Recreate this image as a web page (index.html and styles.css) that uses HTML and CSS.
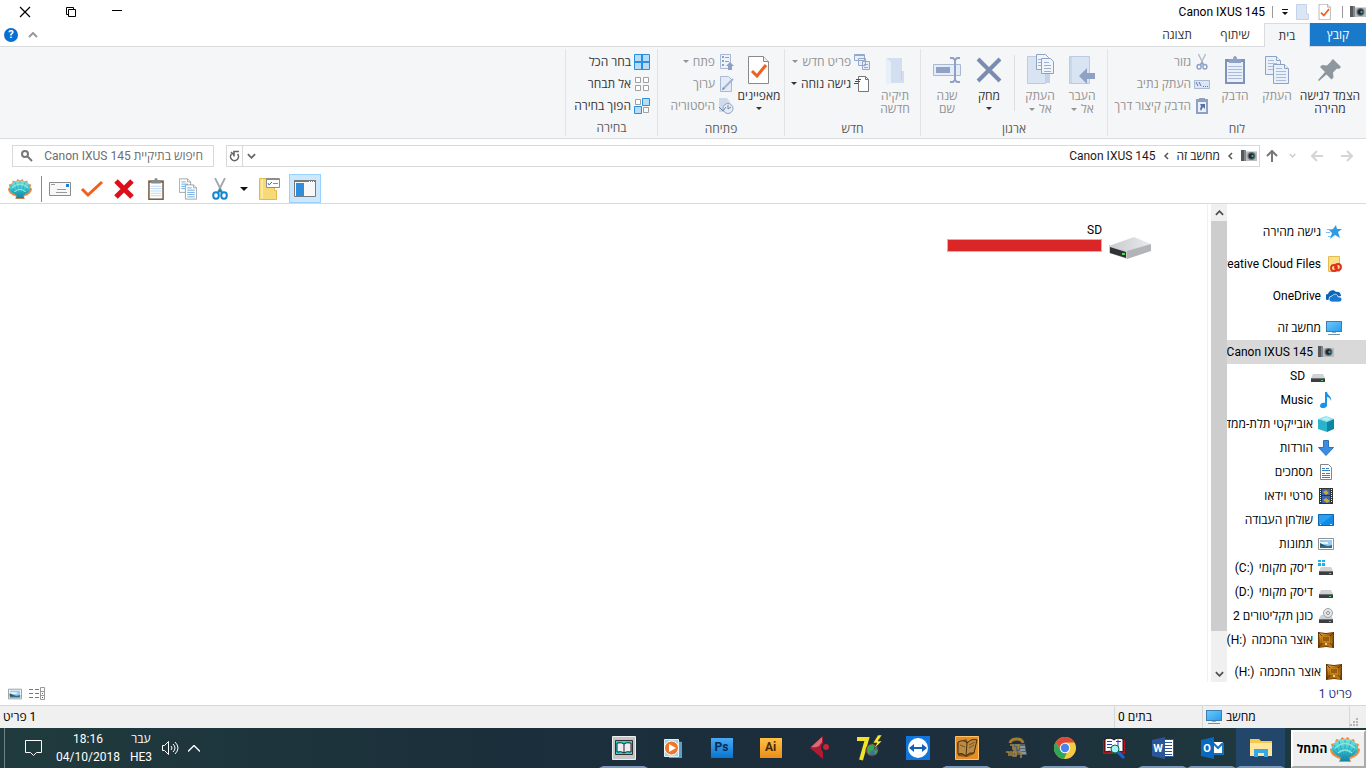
FILE: index.html
```html
<!DOCTYPE html>
<html lang="he" dir="rtl">
<head>
<meta charset="UTF-8">
<meta name="viewport" content="width=device-width, initial-scale=1.0">
<title>Canon IXUS 145</title>
<link rel="stylesheet" href="styles.css">
</head>
<body>
  <!-- shared icons -->
  <svg class="sprite" aria-hidden="true">
    <defs>
      <linearGradient id="shellFill" x1="0" y1="0" x2="0" y2="1"><stop offset="0" stop-color="#7fe3dc"/><stop offset=".5" stop-color="#35c3d0"/><stop offset="1" stop-color="#1583a8"/></linearGradient>
      <linearGradient id="screenFill" x1="0" y1="0" x2="1" y2="1"><stop offset="0" stop-color="#6cc8f8"/><stop offset="1" stop-color="#2a9df0"/></linearGradient>
      <linearGradient id="goldFill" x1="0" y1="0" x2="1" y2="1"><stop offset="0" stop-color="#e8a82c"/><stop offset=".5" stop-color="#9a5a0c"/><stop offset="1" stop-color="#d08a1c"/></linearGradient>
      <linearGradient id="metalFill" x1="0" y1="0" x2="1" y2="0"><stop offset="0" stop-color="#c9cacc"/><stop offset="1" stop-color="#e9eaec"/></linearGradient>
    </defs>
    <symbol id="camera" viewBox="0 0 16 16">
      <path fill="#55595c" d="M0 2h4v11H0z"/><path fill="#83878a" d="M3 2h2v11H3z"/><path fill="#b9bcbf" d="M5 3h11v10H5z"/><path fill="#d5d7d9" d="M5 3h11v1H5z"/>
      <circle cx="10.500" cy="8" r="4" fill="#6c7073"/><circle cx="10.500" cy="8" r="2.800" fill="#1d2930"/><circle cx="11.500" cy="8" r="1.200" fill="#2fa3a5"/>
    </symbol>
    <symbol id="caret" viewBox="0 0 8 4"><path fill="currentColor" d="M1 0h6L4 3z"/></symbol>
    <symbol id="copy" viewBox="0 0 24 28">
      <g fill="var(--paper)" stroke="var(--line)"><path d="M.5.5h11l4 4v14H.5z"/><path d="M11.500.5v4h4"/><path d="M8.500 8.500h11l4 4v15h-15z"/><path d="M19.500 8.500v4h4"/></g>
      <path stroke="var(--rule)" fill="none" d="M3 4.500h6M3 7.500h9M3 10.500h5M3 13.500h5M11 12.500h6M11 15.500h10M11 18.500h10M11 21.500h10M11 24.500h10"/>
    </symbol>
    <symbol id="clipboard" viewBox="0 0 20 28">
      <path fill="var(--board)" d="M0 3h20v25H0z"/><path fill="var(--paper)" d="M2 6h16v20H2z"/>
      <path fill="var(--line)" d="M4 3h4c0-4 4-4 4 0h4v4H4z"/><path stroke="var(--rule)" d="M3 10.500h14M3 13.500h14M3 16.500h14M3 19.500h14M3 22.500h14"/>
    </symbol>
    <symbol id="scissors" viewBox="0 0 16 22">
      <path fill="none" stroke="var(--blade)" stroke-width="1.800" d="M3 0l7 14M13 0L6 14"/>
      <g fill="none" stroke="var(--handle)" stroke-width="2"><ellipse cx="4" cy="17.500" rx="2.800" ry="3.200"/><ellipse cx="12" cy="17.500" rx="2.800" ry="3.200"/><path d="M6 15l2-3 2 3"/></g>
    </symbol>
    <symbol id="shell" viewBox="0 0 30 27">
      <path fill="#f08a3c" d="M9 26l1-3C4 21 0 18 0 13l2-1-1-4 4-1 1-4 4 1 2-3 3 2 3-2 2 3 4-1 1 4 4 1-1 4 2 1c0 5-4 8-10 10l1 3z"/>
      <path fill="url(#shellFill)" d="M10 25l1-4C6 20 2 17 2 13c0-6 6-10 13-10s13 4 13 10c0 4-4 7-9 8l1 4z"/>
      <path fill="none" stroke="#178dac" stroke-width=".6" d="M15 24V4M14 23L9 5M16 23l5-18M13 23L4 9M17 23l9-14M12 22L3 14M18 22l9-8"/>
      <path fill="none" stroke="#8be6dd" stroke-width="1.500" d="M5 12q10-9 20 0M8 17q7-6 14 0"/>
    </symbol>
    <symbol id="drive" viewBox="0 0 16 16">
      <path fill="#d0d1d3" d="M3 6h10l2 4H1z"/><path fill="#3c3f42" d="M1 10h14v4H1z"/><path fill="#707376" d="M1 10h14v1H1z"/><path fill="#45e052" d="M11 12h2v1h-2z"/>
    </symbol>
    <symbol id="gold" viewBox="0 0 16 16">
      <path fill="#6d3c05" d="M0 0l8 1 8-1v16l-8-1-8 1z"/><path fill="url(#goldFill)" d="M1 1l7 1 7-1-1 14-6-1-6 1z"/><path fill="#c07f1a" d="M4 4h8v7H4z"/><path fill="#9a5c0d" d="M5 5h6v4H5z"/><path fill="#f5cf63" d="M7 11h2v2H7z"/><path stroke="#4e2a02" stroke-width=".8" d="M0 0l4 4m12-4l-4 4M0 16l4-5m12 5l-4-5"/>
    </symbol>
    <symbol id="monitor" viewBox="0 0 16 16">
      <path fill="#3b7fb1" d="M0 1h16v11H0z"/><path fill="url(#screenFill)" d="M1 2h14v9H1z"/><path fill="#9db3c1" d="M6 12h4v1H6z"/><path fill="#6f93ab" d="M2 14h12v1H2z"/>
    </symbol>
    <symbol id="picture" viewBox="0 0 16 16">
      <path fill="#fff" stroke="#8f9396" d="M.5 2.500h15v11H.5z"/><path fill="#9bcbf1" d="M2 4h12v8H2z"/><path fill="#e8f3fa" d="M2 6h8v2H2z"/><path fill="#356b86" d="M2 8l3 1 5 1 4-1v3H2z"/><path fill="#2f5b54" d="M2 7l6 3H2z"/>
    </symbol>
    <symbol id="props" viewBox="0 0 22 28">
      <path fill="#fff" stroke="#8a8a8a" d="M.5.5h15l5 5v22H.5z"/><path fill="#eee" stroke="#8a8a8a" d="M15.500.5v5h5"/><path fill="none" stroke="#f0601c" stroke-width="3" d="M4 15l5 5 9-11"/>
    </symbol>
    <symbol id="chev" viewBox="0 0 10 6"><path fill="none" stroke="currentColor" stroke-width="2" d="M1 1l4 4 4-4"/></symbol>
  </svg>

  <header class="titlebar">
    <svg class="i16"><use href="#camera"/></svg>
    <span class="bar"></span>
    <button class="quick" aria-label="מאפיינים"><svg width="14" height="16"><use href="#props"/></svg></button>
    <button class="quick" aria-label="תיקיה חדשה"><svg width="14" height="16" viewBox="0 0 14 16"><path fill="#dbe6f5" stroke="#c5d3e8" d="M.5.500h10V10h2v5.500H.5z"/></svg></button>
    <button class="quick-menu" aria-label="התאמה אישית"><svg width="8" height="8" viewBox="0 0 8 8"><path fill="#111" d="M1 1h6v1H1zM1 4h6L4 7z"/></svg></button>
    <span class="bar"></span>
    <h1>Canon IXUS 145</h1>
    <div class="window-buttons">
      <button aria-label="מזער"><svg width="12" height="12" viewBox="0 0 12 12"><path stroke="#000" d="M1 4.500h10"/></svg></button>
      <button aria-label="שחזר"><svg width="12" height="12" viewBox="0 0 12 12"><path fill="none" stroke="#000" d="M3.500 3.500h7v7h-7zM3 8.500H1.500v-7h7V3"/></svg></button>
      <button aria-label="סגור"><svg width="12" height="12" viewBox="0 0 12 12"><path stroke="#000" stroke-width="1.200" d="M1 1l10 10M11 1L1 11"/></svg></button>
    </div>
  </header>

  <nav class="tabs">
    <button class="tab file">קובץ</button>
    <button class="tab active">בית</button>
    <button class="tab">שיתוף</button>
    <button class="tab">תצוגה</button>
    <div class="tabs-end">
      <button aria-label="כווץ"><svg width="10" height="6" class="flip"><use href="#chev"/></svg></button>
      <button class="help" aria-label="עזרה">?</button>
    </div>
  </nav>

  <section class="ribbon">
    <div class="group clip">
      <div class="tools">
        <button class="big wide"><svg width="32" height="32" viewBox="0 0 32 32"><path fill="#8e979d" d="M19 5l8 8-2 2-2-.5-4 4 .5 5-2 2-5-5L5 27l-1-1 7-8-5-5 2-2 5 .5 4-4L17 7z"/></svg><span>הצמד לגישה מהירה</span></button>
        <button class="big off"><svg width="32" height="32" viewBox="-4 -2 32 32"><use href="#copy" width="24" height="28"/></svg><span>העתק</span></button>
        <button class="big off"><svg width="32" height="32" viewBox="-6 -2 32 32"><use href="#clipboard" width="20" height="28"/></svg><span>הדבק</span></button>
        <div class="small-list">
          <button class="small off"><svg class="i16"><use href="#scissors"/></svg>גזור</button>
          <button class="small off"><svg class="i16" viewBox="0 0 16 16"><path fill="#dce7f5" stroke="#a9b9d3" d="M.5 4.500h15v8H.5z"/><path fill="none" stroke="#5f76a1" d="M2 6l2 4M5 6l2 4M9 10.500h1m1 0h1m1 0h1"/></svg>העתק נתיב</button>
          <button class="small off"><svg class="i16" viewBox="0 0 16 16"><path fill="#8ea0c3" d="M2 1h12v15H2z"/><path fill="#eaf1fa" d="M4 4h8v10H4z"/><path fill="#8ea0c3" d="M5 0h6v3H5z"/><path fill="#5874a7" d="M6 6h5v5L9 9l-2 4-1-2 1-3z"/></svg>הדבק קיצור דרך</button>
        </div>
      </div>
      <h2>לוח</h2>
    </div>
    <div class="group organize">
      <div class="tools">
        <button class="big off"><svg width="32" height="32" viewBox="0 0 32 32"><path fill="#d9e4f3" stroke="#bccbe2" d="M3.500 2.500h20v27h-20z"/><path fill="#c9d7eb" d="M4 3h2v26H4z"/><path fill="#8fa2c5" d="M13 22l8-8v5h8v6h-8v5z"/></svg><span>העבר</span><span>אל <svg class="caret"><use href="#caret"/></svg></span></button>
        <button class="big off"><svg width="32" height="32" viewBox="0 0 32 32"><path fill="#d9e4f3" stroke="#bccbe2" d="M3.500 2.500h18v27h-18z"/><path fill="#c3d2e8" d="M21 17h5v12h-5z"/><g fill="#f0f5fb" stroke="#8fa2c5"><path d="M12.500.5h9l3 3v12h-12z"/><path d="M17.500 4.500h9l3 3v12h-12z"/></g><path stroke="#9db0cf" d="M14 5.500h3m-3 3h3m-3 3h3M20 8.500h5m-5 3h7m-7 3h7m-7 3h7"/></svg><span>העתק</span><span>אל <svg class="caret"><use href="#caret"/></svg></span></button>
        <span class="divider"></span>
        <button class="big"><svg width="32" height="32" viewBox="0 0 32 32"><path stroke="#7a8cb0" stroke-width="4" d="M5 5l22 22M27 5L5 27"/></svg><span>מחק</span><svg class="caret"><use href="#caret"/></svg></button>
        <button class="big off"><svg width="32" height="32" viewBox="0 0 32 32"><path fill="#e4ecf7" stroke="#a8b9d6" d="M2.500 10.500h27v11h-27z"/><path fill="#8fa2c5" d="M5 13h14v6H5z"/><path fill="none" stroke="#8fa2c5" stroke-width="2" d="M19 4h3l2 2 2-2h3M24 5v22M19 28h3l2-2 2 2h3"/></svg><span>שנה</span><span>שם</span></button>
      </div>
      <h2>ארגון</h2>
    </div>
    <div class="group new">
      <div class="tools">
        <button class="big off"><svg width="32" height="32" viewBox="0 0 32 32"><path fill="#d2dff0" d="M7 4h16v13h2v12H7z"/><path fill="#e7eff9" d="M7 4l5 4v21l-5 2z"/><path fill="none" stroke="#c3d2e8" d="M22.500 17v10"/></svg><span>תיקיה חדשה</span></button>
        <div class="small-list">
          <button class="small off"><svg class="i16" viewBox="0 0 16 16"><g fill="#e6eef9" stroke="#94a8cb"><path d="M.5.500h10v6H.5zM4.500 4.500h7v7h-7zM8.500 7.500h7v8h-7z"/></g><path stroke="#94a8cb" d="M1 1.500h9M10 10.500h4m-4 3h4"/></svg>פריט חדש <svg class="caret"><use href="#caret"/></svg></button>
          <button class="small"><svg class="i16" viewBox="0 0 16 16"><path fill="#fff" stroke="#777" d="M4.500.5h7l3 3v12h-10z"/><path fill="none" stroke="#777" d="M11.500.5v3h3"/><path stroke="#175e9c" d="M2 3.500h5M1 5.500h5M0 7.500h4"/></svg>גישה נוחה <svg class="caret"><use href="#caret"/></svg></button>
        </div>
      </div>
      <h2>חדש</h2>
    </div>
    <div class="group open">
      <div class="tools">
        <button class="big"><svg width="32" height="32" viewBox="-5 -2 32 32"><use href="#props" width="22" height="28"/></svg><span>מאפיינים</span><svg class="caret"><use href="#caret"/></svg></button>
        <div class="small-list">
          <button class="small off"><svg class="i16" viewBox="0 0 16 16"><path fill="#edf3fa" stroke="#a8b9d6" d="M2.500.500h10v14h-10z"/><path fill="#8ea1c4" d="M4 2h2v2H4zM4 6h2v2H4zM4 10h2v2H4zM7 3h4v1H7zM7 7h4v1H7zM12 8l4 4h-2v4h-4v-4H8z"/></svg>פתח <svg class="caret"><use href="#caret"/></svg></button>
          <button class="small off"><svg class="i16" viewBox="0 0 16 16"><path fill="#e3ebf6" stroke="#a8b9d6" d="M2.500.500h8l3 3v12h-11z"/><path stroke="#a3b4d2" stroke-width="2" d="M6 12L15 3"/><path fill="#6f84ab" d="M4 14l1-3 2 2z"/></svg>ערוך</button>
          <button class="small off"><svg class="i16" viewBox="0 0 16 16"><path fill="#cfdbed" d="M1 0h8l3 4v10H1z"/><circle cx="10" cy="10.500" r="5" fill="#e5ecf6" stroke="#8ea1c4"/><path fill="none" stroke="#6f84ab" d="M10 7v4l3-2M1 9l4 4 3-4"/></svg>היסטוריה</button>
        </div>
      </div>
      <h2>פתיחה</h2>
    </div>
    <div class="group select">
      <div class="tools">
        <div class="small-list">
          <button class="small"><svg class="i16" viewBox="0 0 16 16"><path fill="#b5dcf8" stroke="#2b8fdc" d="M.5.500h15v15H.5z"/><path stroke="#2b8fdc" stroke-width="2" d="M8 0v16M0 8h16"/></svg>בחר הכל</button>
          <button class="small"><svg class="i16" viewBox="0 0 16 16"><path fill="#fff" stroke="#a0a0a0" d="M1.500 1.500h5v5h-5zM9.500 1.500h5v5h-5zM1.500 9.500h5v5h-5zM9.500 9.500h5v5h-5z"/></svg>אל תבחר</button>
          <button class="small"><svg class="i16" viewBox="0 0 16 16"><path fill="#fff" stroke="#a0a0a0" d="M1.500 1.500h5v5h-5zM9.500 9.500h5v5h-5z"/><path fill="#b5dcf8" stroke="#2b8fdc" d="M8.500.500h7v7h-7zM.5 8.500h7v7h-7z"/></svg>הפוך בחירה</button>
        </div>
      </div>
      <h2>בחירה</h2>
    </div>
  </section>

  <div class="address-row">
    <button class="nav" aria-label="קדימה"><svg width="12" height="12" viewBox="0 0 12 12"><path fill="none" stroke="#d5d5d5" stroke-width="2" d="M0 6h11M6 1l5 5-5 5"/></svg></button>
    <button class="nav" aria-label="אחורה"><svg width="12" height="12" viewBox="0 0 12 12"><path fill="none" stroke="#d5d5d5" stroke-width="2" d="M12 6H1M6 1L1 6l5 5"/></svg></button>
    <button class="nav tiny pale" aria-label="מיקומים אחרונים"><svg width="7" height="5"><use href="#chev"/></svg></button>
    <button class="nav tiny" aria-label="למעלה"><svg width="12" height="12" viewBox="0 0 12 12"><path fill="none" stroke="#777" stroke-width="2" d="M6 12V1M1 6l5-5 5 5"/></svg></button>
    <div class="address">
      <svg class="i16"><use href="#camera"/></svg>
      <svg class="crumb" viewBox="0 0 5 8"><path fill="none" stroke="#555" stroke-width="1.500" d="M4 1L1 4l3 3"/></svg>
      <a href="#">מחשב זה</a>
      <svg class="crumb" viewBox="0 0 5 8"><path fill="none" stroke="#555" stroke-width="1.500" d="M4 1L1 4l3 3"/></svg>
      <a href="#">Canon IXUS 145</a>
      <div class="address-end">
        <button aria-label="מיקומים קודמים"><svg width="9" height="6"><use href="#chev"/></svg></button>
        <button class="refresh" aria-label="רענן"><svg width="11" height="12" viewBox="0 0 11 12"><path fill="none" stroke="#666" stroke-width="1.600" d="M2.500 4a4 4 0 1 0 6 0M10 1.500H5v5M5 5L2 2"/></svg></button>
      </div>
    </div>
    <div class="search">
      <input type="text" aria-label="חיפוש" placeholder="חיפוש בתיקיית Canon IXUS 145">
      <svg width="12" height="12" viewBox="0 0 12 12"><circle cx="4" cy="4" r="3" fill="none" stroke="#777" stroke-width="2"/><path stroke="#777" stroke-width="2" d="M6 6l5 5"/></svg>
    </div>
  </div>

  <div class="toolbar" dir="ltr">
    <button aria-label="Classic Shell"><svg width="24" height="22"><use href="#shell"/></svg></button>
    <span class="toolbar-sep"></span>
    <button aria-label="מאפיינים"><svg width="22" height="14" viewBox="0 0 22 14"><path fill="#f8f8f8" stroke="#8c8c8c" d="M.5.500h21v13H.5z"/><path fill="#1a84dc" d="M17 2h3v3h-3z"/><path stroke="#999" d="M2 2.500h4M8 7.500h9M7 10.500h11"/></svg></button>
    <button aria-label="אישור"><svg width="24" height="18" viewBox="0 0 24 18"><path fill="none" stroke="#f0601c" stroke-width="3" d="M2 9l6 6L22 2"/></svg></button>
    <button aria-label="מחק"><svg width="20" height="20" viewBox="0 0 20 20"><path stroke="#dd0f1a" stroke-width="5" d="M2 2l16 16M18 2L2 18"/></svg></button>
    <button class="brown" aria-label="הדבק"><svg width="16" height="22"><use href="#clipboard"/></svg></button>
    <button class="blue" aria-label="העתק"><svg width="18" height="22"><use href="#copy"/></svg></button>
    <button class="cut" aria-label="גזור"><svg width="16" height="22"><use href="#scissors"/></svg></button>
    <button class="drop" aria-label="עוד"><svg width="8" height="4" viewBox="0 0 8 4"><path fill="#111" d="M0 0h8L4 4z"/></svg></button>
    <button class="folder-opt" aria-label="אפשרויות תיקיה"><svg width="22" height="22" viewBox="0 0 22 22"><path fill="#f7d978" stroke="#e2b94b" d="M.5.500h15v12h2v9H.5z"/><path fill="#fae9a4" d="M2 1h2v20H2z"/><path fill="#fff" stroke="#8c8c8c" d="M7.500.500h13v9h-13z"/><path stroke="#8c8c8c" d="M7 1.500h14M14 5.500h5"/><path fill="none" stroke="#1a84dc" d="M9 5l1 2 3-3"/></svg></button>
    <button class="on" aria-label="חלונית ניווט"><svg width="22" height="17" viewBox="0 0 22 17"><path fill="#f8f8f8" stroke="#7a7a7a" d="M.5.500h21v16H.5z"/><path fill="#7a7a7a" d="M0 0h22v2H0z"/><path fill="#2f8edb" d="M2 3h8v13H2z"/><path stroke="#fff" d="M15 1.500h1m1 0h1m1 0h1"/></svg></button>
  </div>

  <main class="content">
    <aside class="sidebar">
      <a class="item space" href="#"><svg class="i16" viewBox="0 0 16 16"><path fill="#2f9be6" d="M10 1l1 4h5l-4 3 2 6-5-3-5 4 2-6-3-3 4-1z"/><path stroke="#70c0f2" d="M1 5.500h4M0 8.500h4M2 12.500h3"/></svg>גישה מהירה</a>
      <a class="item space" href="#"><svg class="i16" viewBox="0 0 16 16"><path fill="#fde08a" stroke="#e5bb4f" d="M2.500.500h11v15h-11z"/><circle cx="8" cy="12" r="3" fill="none" stroke="#e0301e" stroke-width="1.800"/><circle cx="12" cy="11" r="3" fill="none" stroke="#e0301e" stroke-width="1.800"/></svg><span>Creative Cloud Files</span></a>
      <a class="item space" href="#"><svg class="i16" viewBox="0 0 16 16"><path fill="#0a64b8" d="M2 12a3 3 0 0 1 0-6c1-4 6-5 8-2 4-1 5 3 5 4z"/><path fill="#1878d2" stroke="#fff" stroke-width=".7" d="M6 14a3 3 0 0 1 0-6c2-3 6-2 6 1 5-1 5 5 1 5z"/></svg>OneDrive</a>
      <a class="item" href="#"><svg class="i16"><use href="#monitor"/></svg>מחשב זה</a>
      <a class="item sub selected" href="#"><svg class="i16"><use href="#camera"/></svg>Canon IXUS 145</a>
      <a class="item subsub" href="#"><svg class="i16"><use href="#drive"/></svg>SD</a>
      <a class="item sub" href="#"><svg class="i16" viewBox="0 0 16 16"><path fill="#1594ec" d="M7 0h2c1 4 5 4 4 9-1-3-2-4-4-4v8c0 4-7 4-7 1 0-3 3-4 5-3z"/></svg>Music</a>
      <a class="item sub" href="#"><svg class="i16" viewBox="0 0 16 16"><path fill="#7fe1ec" d="M0 3l8-3 8 3-7 3z"/><path fill="#2ab3cb" d="M0 3l9 3v10l-9-3z"/><path fill="#0b87a5" d="M9 6l7-3v10l-7 3z"/><path fill="#b8f1f5" d="M3 3l5-2 5 2-4 2z"/></svg>אובייקטי תלת-ממדיים</a>
      <a class="item sub" href="#"><svg class="i16" viewBox="0 0 16 16"><path fill="#3c8de0" stroke="#2872be" d="M5.500.500h5v7h5L8 15.500.500 7.500h5z"/></svg>הורדות</a>
      <a class="item sub" href="#"><svg class="i16" viewBox="0 0 16 16"><path fill="#fff" stroke="#858585" d="M2.500.500h8l3 3v12h-11z"/><path stroke="#3684c4" d="M4 4.500h3m1 0h3M4 6.500h8M4 9.500h3m1 0h4M4 11.500h8M4 13.500h8"/></svg>מסמכים</a>
      <a class="item sub" href="#"><svg class="i16" viewBox="0 0 16 16"><path fill="#333" d="M1 0h14v16H1z"/><path fill="#3368b6" d="M4 1h8v6H4zM4 8h8v7H4z"/><path fill="#d2a52b" d="M5 4l3-2 3 3-3 2zM5 12l3-2 4 3-3 2z"/><path stroke="#eee" stroke-dasharray="1 1" d="M2.500 1v14M13.500 1v14"/></svg>סרטי וידאו</a>
      <a class="item sub" href="#"><svg class="i16" viewBox="0 0 16 16"><path fill="#118ae5" stroke="#0a66ae" d="M.5 2.500h15v11H.5z"/><path fill="#2c9ff0" d="M1 3h14L3 12H1z"/><path stroke="#cdeafe" d="M2 12.500h1m9 0h2"/></svg>שולחן העבודה</a>
      <a class="item sub" href="#"><svg class="i16"><use href="#picture"/></svg>תמונות</a>
      <a class="item sub" href="#"><svg class="i16" viewBox="0 0 16 16"><use href="#drive" y="1" width="16" height="16"/><path fill="#16b1ee" d="M0 0h3v2H0zM4 0h3v2H4zM0 3h3v3H0zM4 3h3v3H4z"/></svg>דיסק מקומי <bdi dir="ltr">(C:)</bdi></a>
      <a class="item sub" href="#"><svg class="i16"><use href="#drive"/></svg>דיסק מקומי <bdi dir="ltr">(D:)</bdi></a>
      <a class="item sub" href="#"><svg class="i16" viewBox="0 0 16 16"><use href="#drive" y="1" width="16" height="16"/><circle cx="10" cy="5" r="4.500" fill="#e4e5e7" stroke="#a0a2a5"/><circle cx="10" cy="5" r="1.500" fill="#fff" stroke="#8c8f92"/></svg>כונן תקליטורים 2</a>
      <a class="item sub space" href="#"><svg class="i16"><use href="#gold"/></svg>אוצר החכמה <bdi dir="ltr">(H:)</bdi></a>
      <a class="item" href="#"><svg class="i16"><use href="#gold"/></svg>אוצר החכמה <bdi dir="ltr">(H:)</bdi></a>
    </aside>
    <div class="scrollbar">
      <button aria-label="גלול למעלה"><svg width="9" height="6" class="flip"><use href="#chev"/></svg></button>
      <div class="thumb"></div>
      <div class="track"></div>
      <button aria-label="גלול למטה"><svg width="9" height="6"><use href="#chev"/></svg></button>
    </div>
    <div class="files">
      <div class="tile">
        <svg width="44" height="24" viewBox="0 0 44 24"><path fill="url(#metalFill)" d="M1 10L26 1l17 7-24 8z"/><path fill="#b3b4b7" d="M19 15l24-7v7l-24 8z"/><path fill="#cfd0d2" d="M1 9l18 6v8L1 17z"/><path fill="#303235" d="M2 11l16 5v6L2 17z"/><path fill="#44e052" d="M14 17h3v2h-3z"/></svg>
        <div class="tile-info">
          <div>SD</div>
          <div class="capacity"></div>
        </div>
      </div>
    </div>
  </main>

  <div class="details">
    <span class="count">פריט 1</span>
    <div class="views">
      <button aria-label="פרטים"><svg width="16" height="14" viewBox="0 0 16 14"><path stroke="#777" stroke-dasharray="4 2" d="M0 2.500h11M0 6.500h11M0 10.500h11"/><path fill="#fff" stroke="#999" d="M11.500.500h4v12h-4zM11 4.500h5M11 8.500h5"/><path stroke="#2b7cd3" d="M13 6.500h1"/><path stroke="#d22" d="M13 10.500h1"/></svg></button>
      <button aria-label="תמונות ממוזערות"><svg width="14" height="14"><use href="#picture"/></svg></button>
    </div>
  </div>

  <footer class="status">
    <span class="grip"><svg width="9" height="9" viewBox="0 0 9 9"><path fill="#b5b5b5" d="M6 0h2v2H6zM3 3h2v2H3zM6 3h2v2H6zM0 6h2v2H0zM3 6h2v2H3zM6 6h2v2H6z"/></svg></span>
    <span class="cell place"><svg class="i16"><use href="#monitor"/></svg>מחשב</span>
    <span class="cell bytes">בתים 0</span>
    <span class="cell total">1 פריט</span>
  </footer>

  <div class="taskbar">
    <button class="start"><svg width="30" height="27"><use href="#shell"/></svg>התחל</button>
    <div class="apps">
      <button class="app open current" aria-label="סייר הקבצים"><svg width="24" height="24" viewBox="0 0 24 24"><path fill="#f3c94f" d="M1 3h9l2 2h11v15H1z"/><path fill="#ffe69a" d="M1 7h22v13H1z"/><path fill="#37a8e4" d="M5 13h14v8h-4v-4H9v4H5z"/></svg></button>
      <button class="app open" aria-label="Outlook"><svg width="24" height="24" viewBox="0 0 24 24"><path fill="#fff" d="M12 6h11v12H12z"/><path fill="none" stroke="#1272c4" stroke-width="2" d="M13 7l5 5 5-5M13 18h10V7"/><path fill="#0b69bd" d="M1 4l13-3v22L1 20z"/><text x="7" y="16" class="letter">O</text></svg></button>
      <button class="app open" aria-label="Word"><svg width="24" height="24" viewBox="0 0 24 24"><path fill="#fff" stroke="#2a5699" d="M12.500 3.500h10v17h-10z"/><path stroke="#2a5699" d="M14 6.500h7m-7 3h7m-7 3h7m-7 3h7m-7 3h7"/><path fill="#2a5699" d="M1 4l13-3v22L1 20z"/><text x="7" y="16" class="letter">W</text></svg></button>
      <button class="app" aria-label="חיפוש בספרים"><svg width="24" height="24" viewBox="0 0 24 24"><path fill="#b01820" d="M1 4h22v14H1z"/><path fill="#fff" stroke="#111" d="M3 3q6-2 9 1 3-3 9-1v13q-6-2-9 1-3-3-9-1z"/><path stroke="#2b3cc5" d="M5 5.500h5M5 8.500h5M5 11.500h5M14 5.500h5m-3-2v10"/><circle cx="13" cy="13" r="4" fill="#9ff6ff" stroke="#163"/><path stroke="#1863d5" stroke-width="3" d="M16 16l6 6"/></svg></button>
      <button class="app open" aria-label="Chrome"><svg width="24" height="24" viewBox="0 0 24 24"><circle cx="12" cy="12" r="11" fill="#f5cb42"/><path fill="#e0483a" d="M2.500 6.500A11 11 0 0 1 21.500 6.500H12L8 14z"/><path fill="#2fa45a" d="M2.500 6.500L8 14.500l6 2L11 23A11 11 0 0 1 2.500 6.500z"/><circle cx="12" cy="12" r="5.200" fill="#fff"/><circle cx="12" cy="12" r="4.200" fill="#4a82ee"/></svg></button>
      <button class="app" aria-label="קול הלשון"><svg width="24" height="24" viewBox="0 0 24 24"><path fill="#56636b" d="M9 8h12l2 11H9z"/><path fill="#8998a1" d="M16 10h5v2h-5zM16 13h5v2h-5zM17 16h5v2h-5z"/><path fill="none" stroke="#a07c35" stroke-width="3" d="M6 7q1-4 7-4 5 0 6 4"/><path fill="none" stroke="#a9853c" stroke-width="1.500" d="M6 9h3v5M11 9h4l-1 4M11 11v4M2 16h3v4M7 15v5M9 16h3v4H9zM14 16h3v6"/></svg></button>
      <button class="app open" aria-label="אוצר החכמה"><svg width="24" height="24" viewBox="0 0 24 24"><path fill="#e58e24" stroke="#ffc16a" d="M.5.500h23v23H.5z"/><path fill="#7c531b" d="M2 7l9-4 2 3 9-3-3 15-7 3-9-1z"/><path fill="#b98b45" stroke="#48300d" d="M3 6q6-3 9 1 5-5 10-3l-3 13q-5-1-8 3-4-4-8-2z"/><path fill="none" stroke="#48300d" d="M12 7l-1 13"/><path fill="none" stroke="#7c531b" d="M14 9l6-3m-6 6l5-3M5 9l5 2"/></svg></button>
      <button class="app" aria-label="TeamViewer"><svg width="24" height="24" viewBox="0 0 24 24"><path fill="#1275dc" d="M0 0h24v24H0z"/><circle cx="12" cy="12" r="10" fill="#fff"/><path fill="#0c61bd" d="M3 12l5-4v3h8V8l5 4-5 4v-3H8v3z"/></svg></button>
      <button class="app" aria-label="7"><svg width="26" height="26" viewBox="0 0 26 26"><path fill="none" stroke="#f0e32a" stroke-width="4" d="M1 4h10L5 25"/><circle cx="16" cy="15" r="6" fill="#4a6f8c" stroke="#7d2c2c"/><path fill="#38a64c" d="M12 11l5-2 2 5-4 2-2 4-2-4zM18 16l4-1-2 5z"/><path fill="#f6eb2d" stroke="#282820" stroke-width=".5" d="M22 0l-5 8h4l-3 6 8-8h-4l4-6z"/></svg></button>
      <button class="app" aria-label="Cubase"><svg width="24" height="24" viewBox="0 0 24 24"><path fill="#b01c34" d="M15 0v7a6 6 0 0 0 0 9v7L2 12z"/><path fill="#d96a78" d="M14 1L3 11q5 1 8-1l3-4z"/><circle cx="18" cy="11" r="3" fill="#ca2339"/></svg></button>
      <button class="app" aria-label="Illustrator"><span class="adobe ai">Ai</span></button>
      <button class="app" aria-label="Photoshop"><span class="adobe ps">Ps</span></button>
      <button class="app" aria-label="נגן מדיה"><svg width="22" height="22" viewBox="0 0 22 22"><path fill="#5a9fc6" d="M8 3l12 2v16H7z"/><path fill="#a8d2e9" stroke="#dff1fa" d="M2.500 2.500h14v17h-14z"/><circle cx="9.500" cy="11" r="7" fill="#ef762a" stroke="#fff"/><path fill="#fff" d="M7 7l7 4-7 4z"/></svg></button>
      <button class="app open" aria-label="ספרים"><svg width="24" height="24" viewBox="0 0 24 24"><path fill="#c5c5c5" stroke="#eee" d="M.5.500h23v23H.5z"/><path fill="#18dce0" stroke="#333" d="M3.500 4.500h17v14h-17z"/><path fill="#eee" stroke="#222" d="M5 7q5-1 7 1 2-2 7-1v9q-5-1-7 1-2-2-7-1zM12 8v9"/></svg></button>
    </div>
    <div class="tray">
      <button aria-label="הצג סמלים מוסתרים"><svg width="12" height="7" viewBox="0 0 12 7"><path fill="none" stroke="#fff" stroke-width="1.400" d="M0 6.500l6-6 6 6"/></svg></button>
      <button aria-label="עוצמת קול"><svg width="17" height="14" viewBox="0 0 17 14"><path fill="none" stroke="#fff" d="M.5 4.500h2l4-4v13l-4-4h-2zM9 5q2 2 0 4M11 3q4 4 0 8M13 1q6 6 0 12"/></svg></button>
      <button class="lang">עבר<br>HE3</button>
      <button class="clock">18:16<br>04/10/2018</button>
      <button class="notify" aria-label="מרכז הפעולות"><svg width="17" height="17" viewBox="0 0 17 17"><path fill="none" stroke="#fff" d="M.5.500h16v12h-5l-3 3-3-3h-5z"/></svg></button>
    </div>
    <button class="desktop" aria-label="הצג שולחן עבודה"></button>
  </div>
</body>
</html>
```
FILE: styles.css
```css
* {
  box-sizing: border-box;
}

body {
  display: flex;
  flex-direction: column;
  height: 100vh;
  margin: 0;
  overflow: hidden;
  font-family: Roboto, "Open Sans", "Liberation Sans", sans-serif;
  font-size: 12px;
  line-height: 16px;
  color: #1a1a1a;
  background-color: #fff;
}

button {
  display: flex;
  align-items: center;
  justify-content: center;
  margin: 0;
  padding: 0;
  border: 0;
  background: none;
  font: inherit;
  color: inherit;
}

a {
  color: inherit;
  text-decoration: none;
}

svg {
  flex: none;
}

h1, h2 {
  margin: 0;
  font-size: 12px;
  font-weight: normal;
}

.sprite {
  position: absolute;
  width: 0;
  height: 0;
}

.i16 {
  width: 16px;
  height: 16px;
}

.flip {
  transform: rotate(180deg);
}

/* title bar */
.titlebar {
  display: flex;
  align-items: center;
  height: 23px;
  flex: none;
}

.titlebar h1 {
  color: #000;
}

.bar {
  width: 1px;
  height: 12px;
  margin: 0 7px 0 6px;
  background-color: #999;
}

.quick {
  width: 22px;
}

.quick-menu {
  width: 14px;
}

.titlebar .quick-menu + .bar {
  margin: 0 5px 0 7px;
}

.window-buttons {
  display: flex;
  margin-right: auto;
  padding-left: 2px;
}

.window-buttons button {
  width: 46px;
  height: 22px;
}

/* tabs */
.tabs {
  display: flex;
  height: 24px;
  flex: none;
  border-bottom: 1px solid #dadbdc;
}

.tab {
  width: 58px;
  height: 24px;
  color: #333;
}

.tab.file {
  width: 56px;
  height: 23px;
  color: #fff;
  background-color: #1979ca;
}

.tab.active {
  width: 46px;
  border: 1px solid #dadbdc;
  border-bottom: 0;
  background-color: #f5f6f7;
}

.tabs-end {
  display: flex;
  align-items: center;
  gap: 10px;
  margin-right: auto;
  padding-left: 4px;
  color: #999;
}

.help {
  width: 14px;
  height: 14px;
  border-radius: 50%;
  font-size: 11px;
  font-weight: bold;
  color: #fff;
  background-color: #0a6fd0;
}

/* ribbon */
.ribbon {
  display: flex;
  height: 92px;
  flex: none;
  padding: 2px 0;
  border-bottom: 1px solid #dadbdc;
  background-color: #f5f6f7;
  color: #333;
  --paper: #e9f0fa;
  --line: #8fa2c5;
  --rule: #a9bbd8;
  --board: #7f93b8;
  --blade: #b0b8c5;
  --handle: #8fa2c5;
}

.group {
  display: flex;
  flex-direction: column;
  flex: none;
  border-left: 1px solid #e2e3e4;
}

.group h2 {
  text-align: center;
  color: #5a5a5a;
}

.clip { width: 259px; }
.organize { width: 187px; }
.new { width: 136px; }
.open.group { width: 127px; }
.select { width: 92px; }

.tools {
  display: flex;
  align-items: flex-start;
  height: 72px;
  padding: 0 4px;
}

.big {
  flex-direction: column;
  justify-content: flex-start;
  width: 42px;
  height: 72px;
  padding-top: 5px;
  line-height: 13px;
}

.big > svg:first-child {
  margin-bottom: 4px;
}

.big > .caret {
  margin-top: 4px;
}

.big.wide {
  width: 64px;
}

.off {
  color: #929292;
}

.caret {
  width: 8px;
  height: 4px;
  vertical-align: middle;
}

.divider {
  width: 1px;
  height: 56px;
  margin: 6px 4px;
  background-color: #dcdddf;
}

.small-list {
  display: flex;
  flex-direction: column;
  padding: 2px 4px 0 0;
}

.small {
  justify-content: flex-start;
  gap: 3px;
  height: 22px;
  white-space: nowrap;
}

.select .small-list {
  padding-right: 3px;
}

/* address bar */
.address-row {
  display: flex;
  align-items: center;
  height: 33px;
  flex: none;
  padding: 0 4px 0 12px;
}

.nav {
  width: 30px;
  height: 22px;
}

.nav.tiny {
  width: 20px;
}

.pale {
  color: #ccc;
}

.address {
  display: flex;
  align-items: center;
  flex: 1;
  height: 22px;
  margin: 0 2px 0 12px;
  padding-right: 2px;
  border: 1px solid #d9d9d9;
}

.crumb {
  width: 5px;
  height: 8px;
  margin: 0 8px;
}

.address-end {
  display: flex;
  height: 20px;
  margin-right: auto;
  color: #666;
}

.address-end button {
  width: 16px;
}

.address-end .refresh {
  border-right: 1px solid #d9d9d9;
}

.search {
  display: flex;
  align-items: center;
  width: 202px;
  height: 22px;
  padding: 0 10px 0 8px;
  border: 1px solid #d9d9d9;
}

.search input {
  flex: 1;
  min-width: 0;
  padding: 0;
  border: 0;
  outline: 0;
  font: inherit;
}

.search input::placeholder {
  color: #6d6d6d;
}

/* toolbar */
.toolbar {
  display: flex;
  align-items: center;
  height: 32px;
  flex: none;
  padding: 2px 4px 0;
  border-bottom: 1px solid #d9d9d9;
}

.toolbar button {
  width: 32px;
  height: 29px;
}

.toolbar-sep {
  width: 1px;
  height: 26px;
  margin: 0 2px 0 5px;
  background-color: #8c8c8c;
}

.toolbar .drop {
  width: 15px;
}

.toolbar .folder-opt {
  width: 38px;
}

.toolbar .on {
  border: 1px solid #99d1ff;
  background-color: #cce8ff;
}

.brown {
  --board: #7b6047;
  --paper: #fff;
  --line: #858b8f;
  --rule: #a9cdf0;
}

.blue {
  --paper: #fff;
  --line: #858b8f;
  --rule: #3d94e0;
}

.cut {
  --blade: #a2a7ab;
  --handle: #1187d0;
}

/* main area */
.content {
  display: flex;
  flex: 1;
  min-height: 0;
  color: #000;
}

.sidebar {
  width: 139px;
  flex: none;
  padding-top: 16px;
  overflow: hidden;
}

.item {
  display: flex;
  align-items: center;
  gap: 5px;
  height: 24px;
  padding-right: 24px;
  white-space: nowrap;
}

.space {
  margin-bottom: 8px;
}

.sub {
  padding-right: 32px;
}

.subsub {
  padding-right: 40px;
}

.selected {
  background-color: #d9d9d9;
}

.scrollbar {
  display: flex;
  flex-direction: column;
  width: 16px;
  flex: none;
  background-color: #f0f0f0;
  color: #505050;
}

.scrollbar button {
  height: 17px;
}

.thumb {
  flex: 12;
  background-color: #cdcdcd;
}

.track {
  flex: 1;
}

.files {
  flex: 1;
  margin-right: 3px;
  padding: 18px 55px;
  border-right: 1px solid #f0f0f0;
}

.tile {
  display: flex;
  gap: 6px;
}

.tile > svg {
  margin-top: 14px;
}

.tile-info {
  width: 155px;
}

.capacity {
  height: 13px;
  margin-top: 1px;
  border: 1px solid #bcbcbc;
  background-color: #da2626;
}

/* item count and view switch */
.details {
  display: flex;
  align-items: center;
  justify-content: space-between;
  height: 23px;
  flex: none;
  padding: 0 14px 0 8px;
}

.count {
  color: #1e3287;
}

.views {
  display: flex;
  gap: 7px;
}

/* status bar */
.status {
  display: flex;
  align-items: center;
  height: 23px;
  flex: none;
  border-top: 1px solid #d7d7d7;
  background-color: #f0f0f0;
  color: #000;
}

.grip {
  display: flex;
  align-items: flex-end;
  justify-content: flex-end;
  width: 16px;
  height: 20px;
}

.cell {
  display: flex;
  align-items: center;
  gap: 4px;
  height: 22px;
  padding: 0 3px;
  border-right: 1px solid #d7d7d7;
}

.place {
  flex-direction: row-reverse;
  justify-content: flex-start;
  width: 147px;
}

/* the icon stands to the left of its name here */
.place .i16 {
  order: 1;
}

.place {
  flex-direction: row;
  justify-content: flex-end;
}

.bytes {
  justify-content: flex-end;
  width: 88px;
}

.total {
  flex: 1;
  justify-content: flex-end;
}

/* taskbar */
.taskbar {
  display: flex;
  height: 40px;
  flex: none;
  color: #fff;
  background: linear-gradient(to right, #203b3d, #1b2f3b 35%, #1c2d3c 65%, #203b3e);
}

.start {
  gap: 3px;
  width: 75px;
  height: 38px;
  margin-top: 2px;
  border: 2px outset #fff;
  font-weight: bold;
  color: #000;
  background-color: #f0f0f0;
}

.apps {
  display: flex;
  margin-right: 6px;
}

.app {
  width: 49px;
  height: 40px;
  border: solid transparent;
  border-width: 2px 4px;
}

.app.open {
  border-bottom-color: #7a98ba;
}

.app.current {
  background-color: #22476a;
}

.letter {
  font-size: 11px;
  font-weight: bold;
  text-anchor: middle;
  fill: #fff;
}

.adobe {
  width: 22px;
  height: 20px;
  line-height: 19px;
  font-size: 12px;
  font-weight: bold;
}

.ps {
  color: #052c50;
  background: linear-gradient(#4aaaf3, #0875d1);
}

.ai {
  color: #4b2a00;
  background: linear-gradient(#ffc146, #e98e18);
}

.tray {
  display: flex;
  align-items: stretch;
  margin-right: auto;
}

.tray button {
  width: 24px;
}

.tray .lang {
  width: 34px;
  line-height: 18px;
}

.tray .clock {
  width: 72px;
  line-height: 18px;
}

.tray .notify {
  width: 38px;
  margin-left: 9px;
}

.desktop {
  width: 5px;
  border-right: 1px solid #6f8183;
}
```
